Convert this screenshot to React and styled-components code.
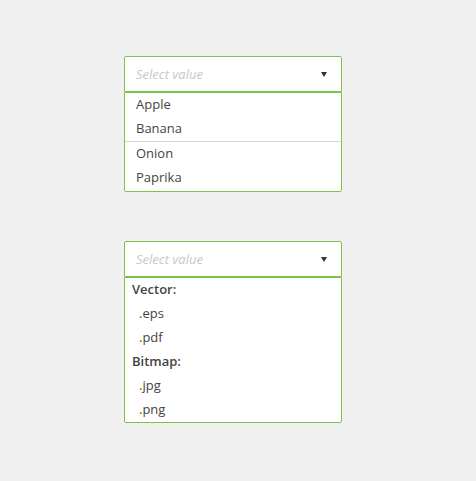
import React from "react";
import styled, { createGlobalStyle } from "styled-components";

const GlobalStyle = createGlobalStyle`
  html, body {
    margin: 0;
    padding: 0;
    background: #f0f0f0;
    font-family: "Open Sans", "Liberation Sans", sans-serif;
  }
`;

const Page = styled.div`
  width: 476px;
  height: 481px;
  display: flex;
  flex-direction: column;
  align-items: flex-start;
  padding: 56px 0 0 124px;
  box-sizing: border-box;
  gap: 49px;
`;

const Select = styled.div`
  width: 218px;
  display: flex;
  flex-direction: column;
`;

const Control = styled.div`
  height: 36px;
  box-sizing: border-box;
  border: 1px solid #7cc34b;
  border-radius: 2px 2px 0 0;
  background: #fff;
  display: flex;
  align-items: center;
  justify-content: space-between;
  padding: 0 14px 0 11px;
`;

const Placeholder = styled.span`
  font-size: 13px;
  font-style: italic;
  color: #c8c8c8;
  margin-top: -1px;
`;

const Arrow = styled.span`
  width: 0;
  height: 0;
  border-left: 3.5px solid transparent;
  border-right: 3.5px solid transparent;
  border-top: 5px solid #333;
`;

const List = styled.ul`
  list-style: none;
  margin: 0;
  padding: 0 0 ${(p) => (p.$extra ? "1px" : "0")};
  background: #fff;
  border: 1px solid #7cc34b;
  border-radius: 0 0 2px 2px;
`;

const Option = styled.li`
  height: 24px;
  line-height: 22px;
  font-size: 13px;
  color: #444;
  padding-left: ${(p) => (p.$indent ? "14px" : "11px")};
`;

const GroupLabel = styled.li`
  height: 24px;
  line-height: 22px;
  font-size: 13px;
  font-weight: 600;
  color: #444;
  padding-left: 7px;
`;

const Divider = styled.li`
  height: 1px;
  background: #d6d6d6;
`;

const Dropdown = ({ children, extra }) => (
  <Select>
    <Control>
      <Placeholder>Select value</Placeholder>
      <Arrow />
    </Control>
    <List $extra={extra}>{children}</List>
  </Select>
);

const App = () => (
  <>
    <GlobalStyle />
    <Page>
      <Dropdown extra>
        <Option>Apple</Option>
        <Option>Banana</Option>
        <Divider />
        <Option>Onion</Option>
        <Option>Paprika</Option>
      </Dropdown>
      <Dropdown>
        <GroupLabel>Vector:</GroupLabel>
        <Option $indent>.eps</Option>
        <Option $indent>.pdf</Option>
        <GroupLabel>Bitmap:</GroupLabel>
        <Option $indent>.jpg</Option>
        <Option $indent>.png</Option>
      </Dropdown>
    </Page>
  </>
);

export default App;
